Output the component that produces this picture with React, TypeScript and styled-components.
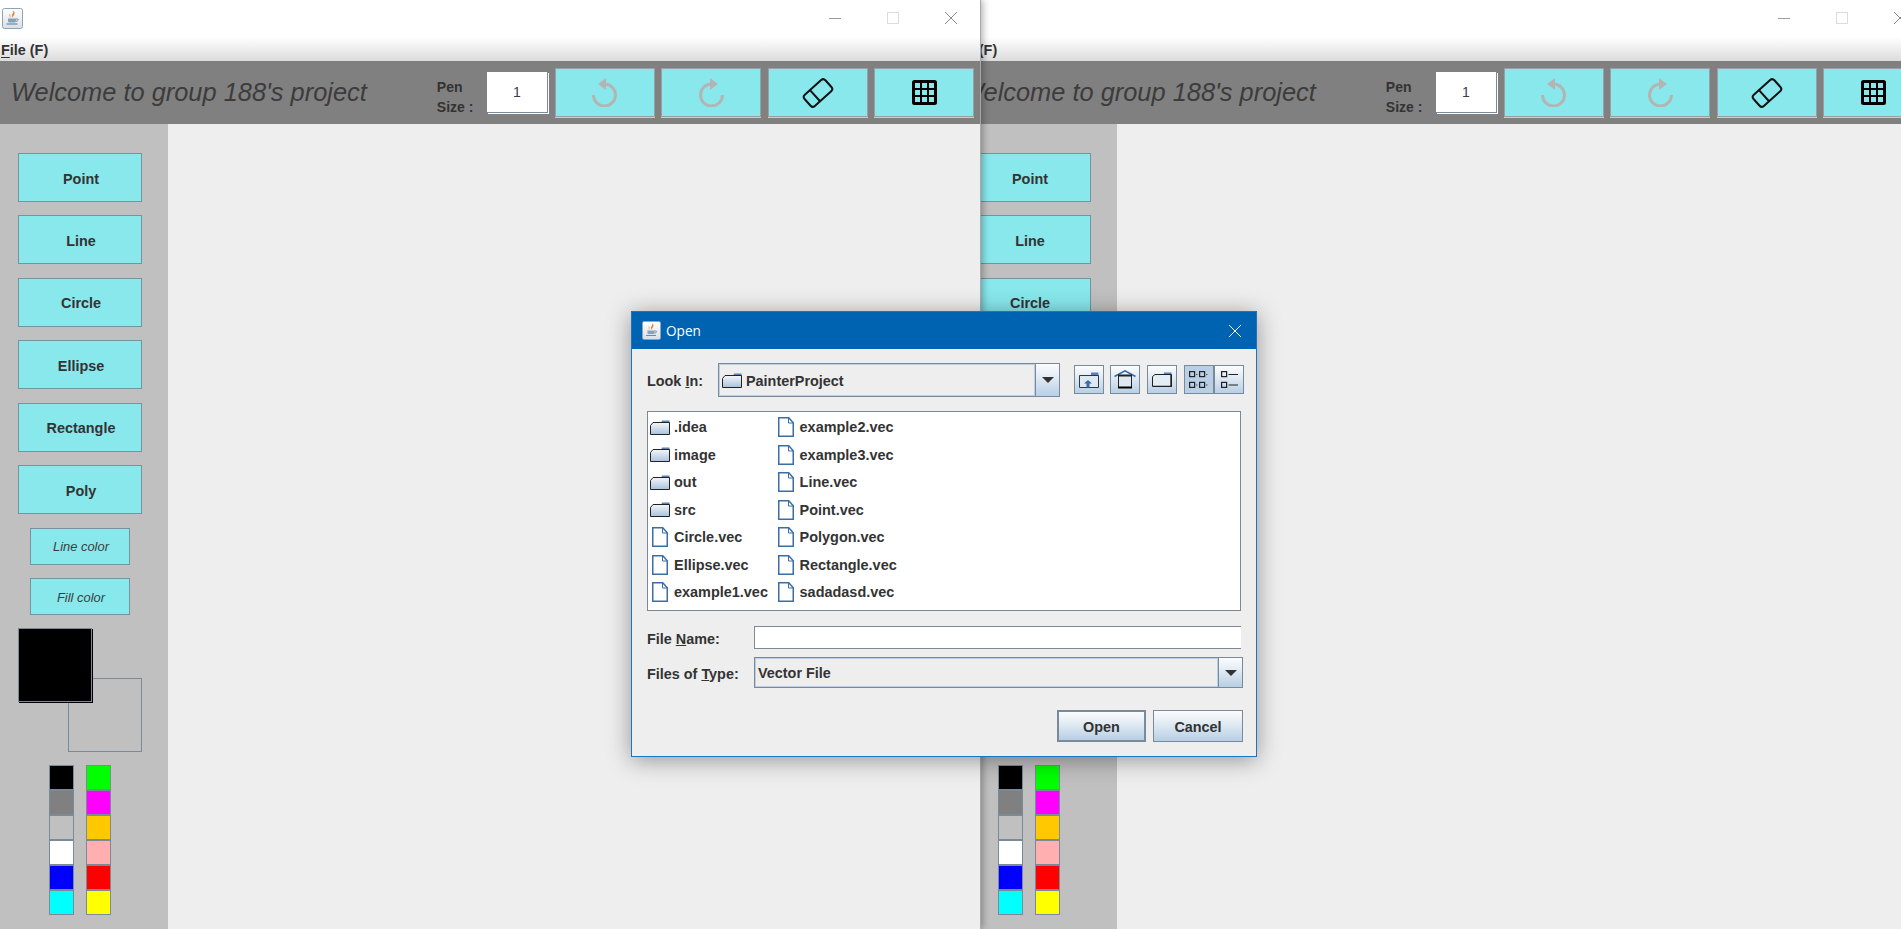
import styled, { createGlobalStyle } from 'styled-components';

const GlobalStyle = createGlobalStyle`
  html, body {
    margin: 0;
    padding: 0;
    background: #eeeeee;
    overflow: hidden;
  }
  * {
    box-sizing: border-box;
  }
`;

const FONT = '"Liberation Sans", Arial, sans-serif';
const CYAN = '#88e8ec';
const STEEL = '#7a8a99';
const METAL = 'linear-gradient(180deg, #fbfcfd 0%, #e6eef5 35%, #b8cfe5 100%)';

const Desktop = styled.div`
  position: relative;
  width: 1901px;
  height: 929px;
  overflow: hidden;
  font-family: ${FONT};
  color: #333333;
`;

/* ---------- painter window ---------- */

const Window = styled.div<{ $left: number; $front?: boolean }>`
  position: absolute;
  top: 0;
  left: ${({ $left }) => $left}px;
  width: 981px;
  height: 929px;
  display: flex;
  flex-direction: column;
  background: #eeeeee;
  z-index: ${({ $front }) => ($front ? 2 : 1)};
  border-right: 1px solid #a8a8a8;
  box-shadow: ${({ $front }) => ($front ? '2px 0 7px rgba(0, 0, 0, 0.3)' : 'none')};
`;

const TitleBar = styled.div`
  height: 37px;
  flex: none;
  background: #ffffff;
  display: flex;
  align-items: flex-start;
  padding: 8px 0 0 2px;
`;

const WindowControls = styled.div`
  margin-left: auto;
  display: flex;
  margin-top: 4px;
  margin-right: 23px;
  gap: 46px;
`;

const MenuBar = styled.div`
  height: 24px;
  flex: none;
  background: linear-gradient(180deg, #ffffff 0%, #dcdcdc 100%);
  font-size: 14.4px;
  font-weight: bold;
  line-height: 26px;
  padding-left: 1px;

  u {
    text-underline-offset: 2px;
  }
`;

const Toolbar = styled.div`
  height: 63px;
  flex: none;
  background: #808080;
  display: flex;
  align-items: center;
  padding: 0 6px 0 11px;
`;

const Welcome = styled.div`
  flex: 1;
  font-size: 25.4px;
  font-style: italic;
  color: #3c3c3c;
  white-space: nowrap;
  padding-bottom: 1px;
`;

const PenLabel = styled.div`
  width: 51px;
  font-size: 14px;
  font-weight: bold;
  line-height: 20px;
  color: #333333;
  padding: 9px 0 0 1px;
`;

const PenField = styled.div`
  width: 61px;
  height: 41px;
  margin: 0 7px 0 0;
  background: #ffffff;
  border-right: 1px solid ${STEEL};
  border-bottom: 1px solid ${STEEL};
  box-shadow: 1px 1px 0 #ffffff;
  display: flex;
  align-items: center;
  justify-content: center;
  font-size: 14px;
  color: #3c3c50;
`;

const ToolGroup = styled.div`
  display: flex;
  gap: 6.4px;
`;

const ToolButton = styled.div`
  width: 100px;
  height: 49px;
  background: ${CYAN};
  border: 1px solid #96a0a6;
  box-shadow: 0 1px 0 ${CYAN};
  display: flex;
  align-items: center;
  justify-content: center;
`;

const Body = styled.div`
  flex: 1;
  display: flex;
  min-height: 0;
`;

const Sidebar = styled.div`
  width: 168px;
  flex: none;
  background: #c0c0c0;
  display: flex;
  flex-direction: column;
  align-items: flex-start;
  gap: 13.45px;
  padding: 29px 0 0 18px;
`;

const ShapeButton = styled.div`
  width: 124px;
  height: 49px;
  background: ${CYAN};
  border: 1px solid #76949e;
  display: flex;
  align-items: center;
  justify-content: center;
  font-size: 14.4px;
  font-weight: bold;
  color: #333333;
  padding: 2px 0 0 2px;
`;

const ColorButton = styled.div`
  width: 100px;
  height: 37px;
  margin-left: 12px;
  background: ${CYAN};
  border: 1px solid #76949e;
  display: flex;
  align-items: center;
  justify-content: center;
  font-size: 12.9px;
  font-style: italic;
  color: #3c3c3c;
  padding: 1px 0 0 2px;
`;

const ColorWells = styled.div`
  position: relative;
  width: 124px;
  height: 124px;
  margin-top: -1px;
  padding: 50px 0 0 50px;
`;

const BackWell = styled.div`
  width: 74px;
  height: 74px;
  background: #c0c0c0;
  border: 1px solid ${STEEL};
`;

const FrontWell = styled.div`
  position: absolute;
  top: 0;
  left: 0;
  width: 74px;
  height: 74px;
  background: #000000;
  border: 1px solid ${STEEL};
  box-shadow: 1px 1px 0 #000000;
`;

const Palette = styled.div`
  display: flex;
  gap: 12px;
  margin-left: 31px;
`;

const PaletteColumn = styled.div`
  display: flex;
  flex-direction: column;
`;

const Swatch = styled.div<{ $color: string }>`
  width: 25px;
  height: 25px;
  background: ${({ $color }) => $color};
  border: 1px solid ${STEEL};
`;

const Canvas = styled.div`
  flex: 1;
  background: #eeeeee;
`;

/* ---------- open dialog ---------- */

const Dialog = styled.div`
  position: absolute;
  left: 631px;
  top: 311px;
  width: 626px;
  height: 446px;
  z-index: 5;
  background: #eeeeee;
  border: 1px solid #1a76c4;
  box-shadow: 0 3px 22px rgba(0, 0, 0, 0.38);
  display: flex;
  flex-direction: column;
`;

const DialogTitle = styled.div`
  height: 37px;
  flex: none;
  background: #0063b1;
  color: #ffffff;
  display: flex;
  align-items: center;
  gap: 5px;
  padding: 0 15px 0 10px;
  font-family: "Open Sans", sans-serif;
  font-size: 13.6px;
`;

const CloseMark = styled.div`
  margin-left: auto;
  display: flex;
`;

const DialogBody = styled.div`
  padding: 14px 0 0 15px;
  width: 611px;
  display: flex;
  flex-direction: column;
`;

const LookRow = styled.div`
  display: flex;
  align-items: flex-start;
  height: 34px;
`;

const FieldLabel = styled.label<{ $width: number }>`
  width: ${({ $width }) => $width}px;
  flex: none;
  align-self: center;
  padding-top: 2px;
  font-size: 14.4px;
  font-weight: bold;
  color: #333333;
  white-space: nowrap;
`;

const Combo = styled.div<{ $width: number; $height: number }>`
  width: ${({ $width }) => $width}px;
  height: ${({ $height }) => $height}px;
  flex: none;
  display: flex;
  border: 1px solid ${STEEL};
  background: #eeeeee;
`;

const ComboValue = styled.div`
  flex: 1;
  border: 1px solid #b8cfe5;
  display: flex;
  align-items: center;
  gap: 4px;
  padding: 1px 0 0 2px;
  font-size: 14.4px;
  font-weight: bold;
  color: #333333;
`;

const ComboArrow = styled.div`
  width: 24px;
  flex: none;
  background: ${METAL};
  border-left: 1px solid ${STEEL};
  display: flex;
  align-items: center;
  justify-content: center;

  &::after {
    content: '';
    border-left: 6px solid transparent;
    border-right: 6px solid transparent;
    border-top: 6px solid #333333;
  }
`;

const FileTools = styled.div`
  display: flex;
  margin: 2px 0 0 14px;
`;

const FileTool = styled.div<{ $pressed?: boolean; $gap?: number }>`
  width: 30px;
  height: 29px;
  margin-right: ${({ $gap }) => $gap ?? 0}px;
  border: 1px solid ${STEEL};
  background: ${({ $pressed }) => ($pressed ? '#b8cfe5' : METAL)};
  display: flex;
  align-items: center;
  justify-content: center;
`;

const FileList = styled.div`
  width: 594px;
  height: 200px;
  margin-top: 14px;
  background: #ffffff;
  border: 1px solid ${STEEL};
  display: grid;
  grid-auto-flow: column;
  grid-template-rows: repeat(7, 27.45px);
  grid-auto-columns: 125.6px;
  padding: 1.6px 0 0 1px;
`;

const FileEntry = styled.div`
  display: flex;
  align-items: center;
  font-size: 14.45px;
  font-weight: bold;
  color: #333333;
`;

const EntryIcon = styled.span`
  width: 25px;
  flex: none;
  display: flex;
  justify-content: center;
  padding-right: 3px;
`;

const NameRow = styled.div`
  display: flex;
  margin-top: 15px;
`;

const NameInput = styled.div`
  width: 487px;
  height: 23px;
  background: #ffffff;
  border-top: 1px solid ${STEEL};
  border-left: 1px solid ${STEEL};
  border-bottom: 1px solid ${STEEL};
`;

const TypeRow = styled.div`
  display: flex;
  margin-top: 8px;
`;

const ActionRow = styled.div`
  display: flex;
  justify-content: flex-end;
  gap: 7px;
  margin-top: 22px;
  width: 596px;
`;

const ActionButton = styled.div<{ $width: number; $default?: boolean }>`
  width: ${({ $width }) => $width}px;
  height: 32px;
  background: ${METAL};
  border: ${({ $default }) => ($default ? 2 : 1)}px solid ${STEEL};
  display: flex;
  align-items: center;
  justify-content: center;
  font-size: 14.4px;
  font-weight: bold;
  color: #333333;
  padding-top: 1px;
`;

/* ---------- drawings ---------- */

const JavaIcon = ({ size = 21 }: { size?: number }) => (
  <svg width={size} height={size} viewBox="0 0 21 21">
    <defs>
      <linearGradient id="tile" x1="0" y1="0" x2="0" y2="1">
        <stop offset="0" stopColor="#ffffff" />
        <stop offset="1" stopColor="#d8dfe6" />
      </linearGradient>
    </defs>
    <rect x="0.5" y="0.5" width="20" height="20" rx="2" fill="url(#tile)" stroke="#8ca3b8" />
    <path d="M11 3c1.5 2-1.5 3-1 5 .2 1 1 1.5 1 1.5-.5-2 3-3 1-6.5z" fill="#e8792b" />
    <path d="M8 6c-.6 1.4 0 2.6.6 3.4" stroke="#f0a868" fill="none" />
    <path d="M6 10.5h8v2.5c0 1-1 1.5-2 1.5H8c-1 0-2-.5-2-1.5z" fill="#8aa2b8" />
    <path d="M14 11h1.6c.9 0 .9 2-1.6 2.4" stroke="#6f8ba4" fill="none" />
    <path d="M4.5 16h11" stroke="#6f8ba4" strokeWidth="1.2" />
  </svg>
);

const MinimizeIcon = () => (
  <svg width="12" height="12" viewBox="0 0 12 12">
    <path d="M0 6.5h12" stroke="#9a9a9a" />
  </svg>
);

const MaximizeIcon = () => (
  <svg width="12" height="12" viewBox="0 0 12 12">
    <rect x="0.5" y="0.5" width="11" height="11" fill="none" stroke="#dcdcdc" />
  </svg>
);

const CloseIcon = ({ color = '#8a8a8a', size = 12 }: { color?: string; size?: number }) => (
  <svg width={size} height={size} viewBox="0 0 12 12">
    <path d="M0 0l12 12M12 0L0 12" stroke={color} strokeWidth="1" />
  </svg>
);

const UndoIcon = ({ flip }: { flip?: boolean }) => (
  <svg width="25" height="29" viewBox="0 0 25 29" style={flip ? { transform: 'scaleX(-1)' } : undefined}>
    <path d="M12.5 6a11 11 0 1 1-11 11" fill="none" stroke="#b4b4b4" strokeWidth="3" />
    <path d="M14 0v12L6 6z" fill="#b4b4b4" />
  </svg>
);

const EraserIcon = () => (
  <svg width="32" height="32" viewBox="0 0 32 32">
    <g transform="rotate(-42 16 16)" fill="none" stroke="#111111" strokeWidth="2">
      <rect x="2" y="8.5" width="28" height="15" rx="3" />
      <path d="M12 8.5v15" />
    </g>
  </svg>
);

const GridIcon = () => (
  <svg width="25" height="25" viewBox="0 0 25 25">
    <rect x="1.5" y="1.5" width="22" height="22" rx="1" fill="none" stroke="#000000" strokeWidth="3" />
    <path d="M9 1v23M16 1v23M1 9h23M1 16h23" stroke="#000000" strokeWidth="2" />
  </svg>
);

const FolderIcon = () => (
  <svg width="20" height="15" viewBox="0 0 20 15">
    <defs>
      <linearGradient id="folderFill" x1="0" y1="0" x2="0" y2="1">
        <stop offset="0" stopColor="#f4f7fa" />
        <stop offset="1" stopColor="#a9c2dc" />
      </linearGradient>
    </defs>
    <path d="M12 0.5h7.5v3H11z" fill="#5a80b8" />
    <path d="M0.5 5.5L3 2.5h16.5v12H0.5z" fill="url(#folderFill)" stroke="#222222" />
  </svg>
);

const DocIcon = () => (
  <svg width="16" height="20" viewBox="0 0 16 20">
    <path d="M0.75 0.75h10l4.5 5v13.5H0.75z" fill="#ffffff" stroke="#3a6ea5" strokeWidth="1.5" />
    <path d="M10.5 1v5h5" fill="none" stroke="#3a6ea5" />
  </svg>
);

const FolderUpIcon = () => (
  <svg width="20" height="16" viewBox="0 0 20 16">
    <path d="M12 0.5h7.5v4H12z" fill="#5a80b8" />
    <path d="M0.5 15.5V3.5h19v12z" fill="#dfe8f1" stroke="#2a3a4a" />
    <path d="M9 8l-4 3.5h2.5v4h3v-4H13z" fill="#2f6cb0" />
  </svg>
);

const HomeIcon = () => (
  <svg width="22" height="19" viewBox="0 0 22 19">
    <path d="M0.5 6.5L11 0.8l10.5 5.7" fill="none" stroke="#2f6cb0" strokeWidth="1.5" />
    <rect x="4.5" y="5.5" width="13" height="12" fill="#dfe8f1" stroke="#222222" />
    <path d="M4 5.5h14" stroke="#222222" strokeWidth="2" />
    <path d="M4 17.5h14" stroke="#000000" strokeWidth="2" />
  </svg>
);

const NewFolderIcon = () => (
  <svg width="20" height="15" viewBox="0 0 20 15">
    <path d="M12 0.5h7.5v3h-8z" fill="#5a80b8" />
    <path d="M0.5 14.5V4.5L3 2.5h16.5v12z" fill="#e4ecf4" stroke="#222222" />
    <path d="M19 3v11.5H1" fill="none" stroke="#222222" strokeWidth="1.4" />
  </svg>
);

const ListViewIcon = () => (
  <svg width="20" height="17" viewBox="0 0 20 17">
    <g fill="none" stroke="#222222" strokeWidth="1.2">
      <rect x="0.6" y="0.6" width="5" height="5" />
      <rect x="0.6" y="11.4" width="5" height="5" />
      <rect x="10.6" y="0.6" width="5" height="5" />
      <rect x="10.6" y="11.4" width="5" height="5" />
    </g>
    <path d="M7 3.5h1.5M7 14h1.5M17 3.5h1.5M17 14h1.5" stroke="#555555" />
  </svg>
);

const DetailsViewIcon = () => (
  <svg width="17" height="17" viewBox="0 0 17 17">
    <g fill="none" stroke="#222222" strokeWidth="1.2">
      <rect x="0.6" y="0.6" width="5" height="5" />
      <rect x="0.6" y="11.4" width="5" height="5" />
      <path d="M7.5 3.5H17M7.5 14H17" />
    </g>
  </svg>
);

/* ---------- data ---------- */

const shapes = ['Point', 'Line', 'Circle', 'Ellipse', 'Rectangle', 'Poly'];
const leftColors = ['#000000', '#808080', '#c0c0c0', '#ffffff', '#0000ff', '#00ffff'];
const rightColors = ['#00ff00', '#ff00ff', '#ffc800', '#ffafaf', '#ff0000', '#ffff00'];

const entries: { name: string; folder?: boolean }[] = [
  { name: '.idea', folder: true },
  { name: 'image', folder: true },
  { name: 'out', folder: true },
  { name: 'src', folder: true },
  { name: 'Circle.vec' },
  { name: 'Ellipse.vec' },
  { name: 'example1.vec' },
  { name: 'example2.vec' },
  { name: 'example3.vec' },
  { name: 'Line.vec' },
  { name: 'Point.vec' },
  { name: 'Polygon.vec' },
  { name: 'Rectangle.vec' },
  { name: 'sadadasd.vec' },
];

const PainterWindow = ({ left, front }: { left: number; front?: boolean }) => (
  <Window $left={left} $front={front}>
    <TitleBar>
      <JavaIcon />
      <WindowControls>
        <MinimizeIcon />
        <MaximizeIcon />
        <CloseIcon />
      </WindowControls>
    </TitleBar>
    <MenuBar>
      <u>F</u>ile (F)
    </MenuBar>
    <Toolbar>
      <Welcome>Welcome to group 188's project</Welcome>
      <PenLabel>
        Pen
        <br />
        Size :
      </PenLabel>
      <PenField>1</PenField>
      <ToolGroup>
        <ToolButton>
          <UndoIcon />
        </ToolButton>
        <ToolButton>
          <UndoIcon flip />
        </ToolButton>
        <ToolButton>
          <EraserIcon />
        </ToolButton>
        <ToolButton>
          <GridIcon />
        </ToolButton>
      </ToolGroup>
    </Toolbar>
    <Body>
      <Sidebar>
        {shapes.map((shape) => (
          <ShapeButton key={shape}>{shape}</ShapeButton>
        ))}
        <ColorButton>Line color</ColorButton>
        <ColorButton>Fill color</ColorButton>
        <ColorWells>
          <BackWell />
          <FrontWell />
        </ColorWells>
        <Palette>
          <PaletteColumn>
            {leftColors.map((color) => (
              <Swatch key={color} $color={color} />
            ))}
          </PaletteColumn>
          <PaletteColumn>
            {rightColors.map((color) => (
              <Swatch key={color} $color={color} />
            ))}
          </PaletteColumn>
        </Palette>
      </Sidebar>
      <Canvas />
    </Body>
  </Window>
);

const App = () => (
  <Desktop>
    <GlobalStyle />
    <PainterWindow left={949} />
    <PainterWindow left={0} front />
    <Dialog>
      <DialogTitle>
        <JavaIcon size={19} />
        Open
        <CloseMark>
          <CloseIcon color="#ffffff" />
        </CloseMark>
      </DialogTitle>
      <DialogBody>
        <LookRow>
          <FieldLabel $width={71}>
            Look <u>I</u>n:
          </FieldLabel>
          <Combo $width={342} $height={34}>
            <ComboValue>
              <FolderIcon />
              PainterProject
            </ComboValue>
            <ComboArrow />
          </Combo>
          <FileTools>
            <FileTool $gap={6}>
              <FolderUpIcon />
            </FileTool>
            <FileTool $gap={7}>
              <HomeIcon />
            </FileTool>
            <FileTool $gap={7}>
              <NewFolderIcon />
            </FileTool>
            <FileTool $pressed>
              <ListViewIcon />
            </FileTool>
            <FileTool>
              <DetailsViewIcon />
            </FileTool>
          </FileTools>
        </LookRow>
        <FileList>
          {entries.map((entry) => (
            <FileEntry key={entry.name}>
              <EntryIcon>{entry.folder ? <FolderIcon /> : <DocIcon />}</EntryIcon>
              {entry.name}
            </FileEntry>
          ))}
        </FileList>
        <NameRow>
          <FieldLabel $width={107}>
            File <u>N</u>ame:
          </FieldLabel>
          <NameInput />
        </NameRow>
        <TypeRow>
          <FieldLabel $width={107}>
            Files of <u>T</u>ype:
          </FieldLabel>
          <Combo $width={489} $height={31}>
            <ComboValue>Vector File</ComboValue>
            <ComboArrow />
          </Combo>
        </TypeRow>
        <ActionRow>
          <ActionButton $width={89} $default>
            Open
          </ActionButton>
          <ActionButton $width={90}>Cancel</ActionButton>
        </ActionRow>
      </DialogBody>
    </Dialog>
  </Desktop>
);

export default App;
